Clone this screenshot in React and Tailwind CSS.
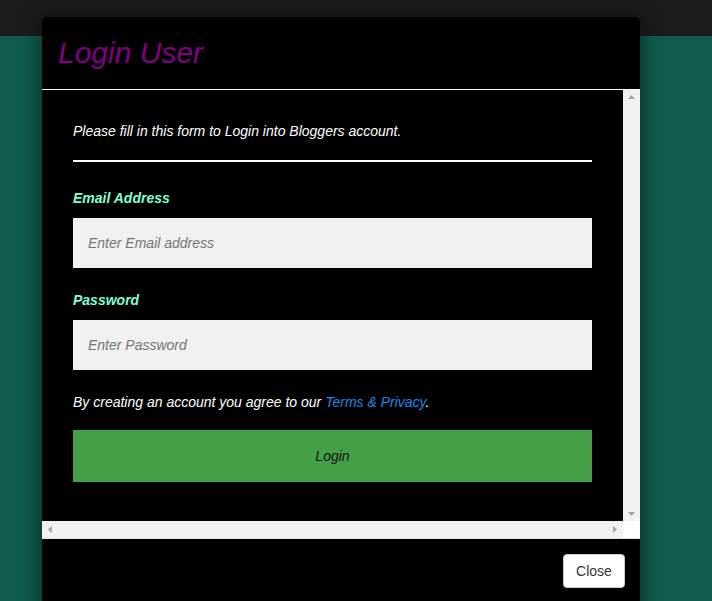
import React from 'react';

const Arrow = ({ dir }) => {
  const pts = {
    up: '0,4 3.5,0 7,4',
    down: '0,0 7,0 3.5,4',
    left: '4,0 4,7 0,3.5',
    right: '0,0 4,3.5 0,7',
  }[dir];
  const vertical = dir === 'up' || dir === 'down';
  return (
    <svg width={vertical ? 7 : 4} height={vertical ? 4 : 7} viewBox={vertical ? '0 0 7 4' : '0 0 4 7'}>
      <polygon points={pts} fill="#a3a3a3" />
    </svg>
  );
};

export default function App() {
  return (
    <div className="relative w-[712px] h-[601px] overflow-hidden bg-[#0f5c4d] font-['Liberation_Sans',Arial,sans-serif]">
      <div className="h-[36px] bg-[#1b1b1b]" />

      {/* modal */}
      <div className="absolute left-[42px] top-[17px] w-[598px] h-[640px] bg-black rounded-[5px] shadow-[0_4px_20px_rgba(0,0,0,0.6)] flex flex-col">
        <div className="h-[73px] px-4 flex items-center border-b border-white">
          <h2 className="text-[30px] italic text-[#800080] leading-9">Login User</h2>
        </div>

        <div className="flex">
          <div className="w-[581px] h-[431px] px-[31px] pt-[31px] italic text-[14px]">
            <p className="text-white leading-5">Please fill in this form to Login into Bloggers account.</p>
            <div className="mt-[19px] h-[2px] bg-white" />

            <label className="block mt-[26px] leading-5 font-bold text-[#7fffd4]">Email Address</label>
            <input
              className="mt-[10px] block w-full h-[50px] px-[15px] bg-[#f1f1f1] italic outline-none placeholder:text-[#757575]"
              placeholder="Enter Email address"
            />

            <label className="block mt-[22px] leading-5 font-bold text-[#7fffd4]">Password</label>
            <input
              type="password"
              className="mt-[10px] block w-full h-[50px] px-[15px] bg-[#f1f1f1] italic outline-none placeholder:text-[#757575]"
              placeholder="Enter Password"
            />

            <p className="mt-[22px] leading-5 text-white">
              By creating an account you agree to our <a className="text-[#1e88e5]">Terms &amp; Privacy</a>.
            </p>

            <button className="mt-[18px] w-full h-[52px] bg-[#43a047] italic text-[#111]">Login</button>
          </div>
          <div className="w-[17px] h-[431px] bg-[#f1f1f1] flex flex-col items-center justify-between py-[5px]">
            <Arrow dir="up" />
            <Arrow dir="down" />
          </div>
        </div>

        <div className="flex h-[18px] border-b border-[#dee2e6]">
          <div className="w-[581px] bg-[#f1f1f1] flex items-center justify-between px-[6px]">
            <Arrow dir="left" />
            <Arrow dir="right" />
          </div>
          <div className="w-[17px] bg-white" />
        </div>

        <div className="flex justify-end pt-[15px] pr-[15px]">
          <button className="w-[62px] h-[34px] bg-white border border-[#ccc] rounded-[4px] text-[14px] text-[#333]">Close</button>
        </div>
      </div>
    </div>
  );
}
